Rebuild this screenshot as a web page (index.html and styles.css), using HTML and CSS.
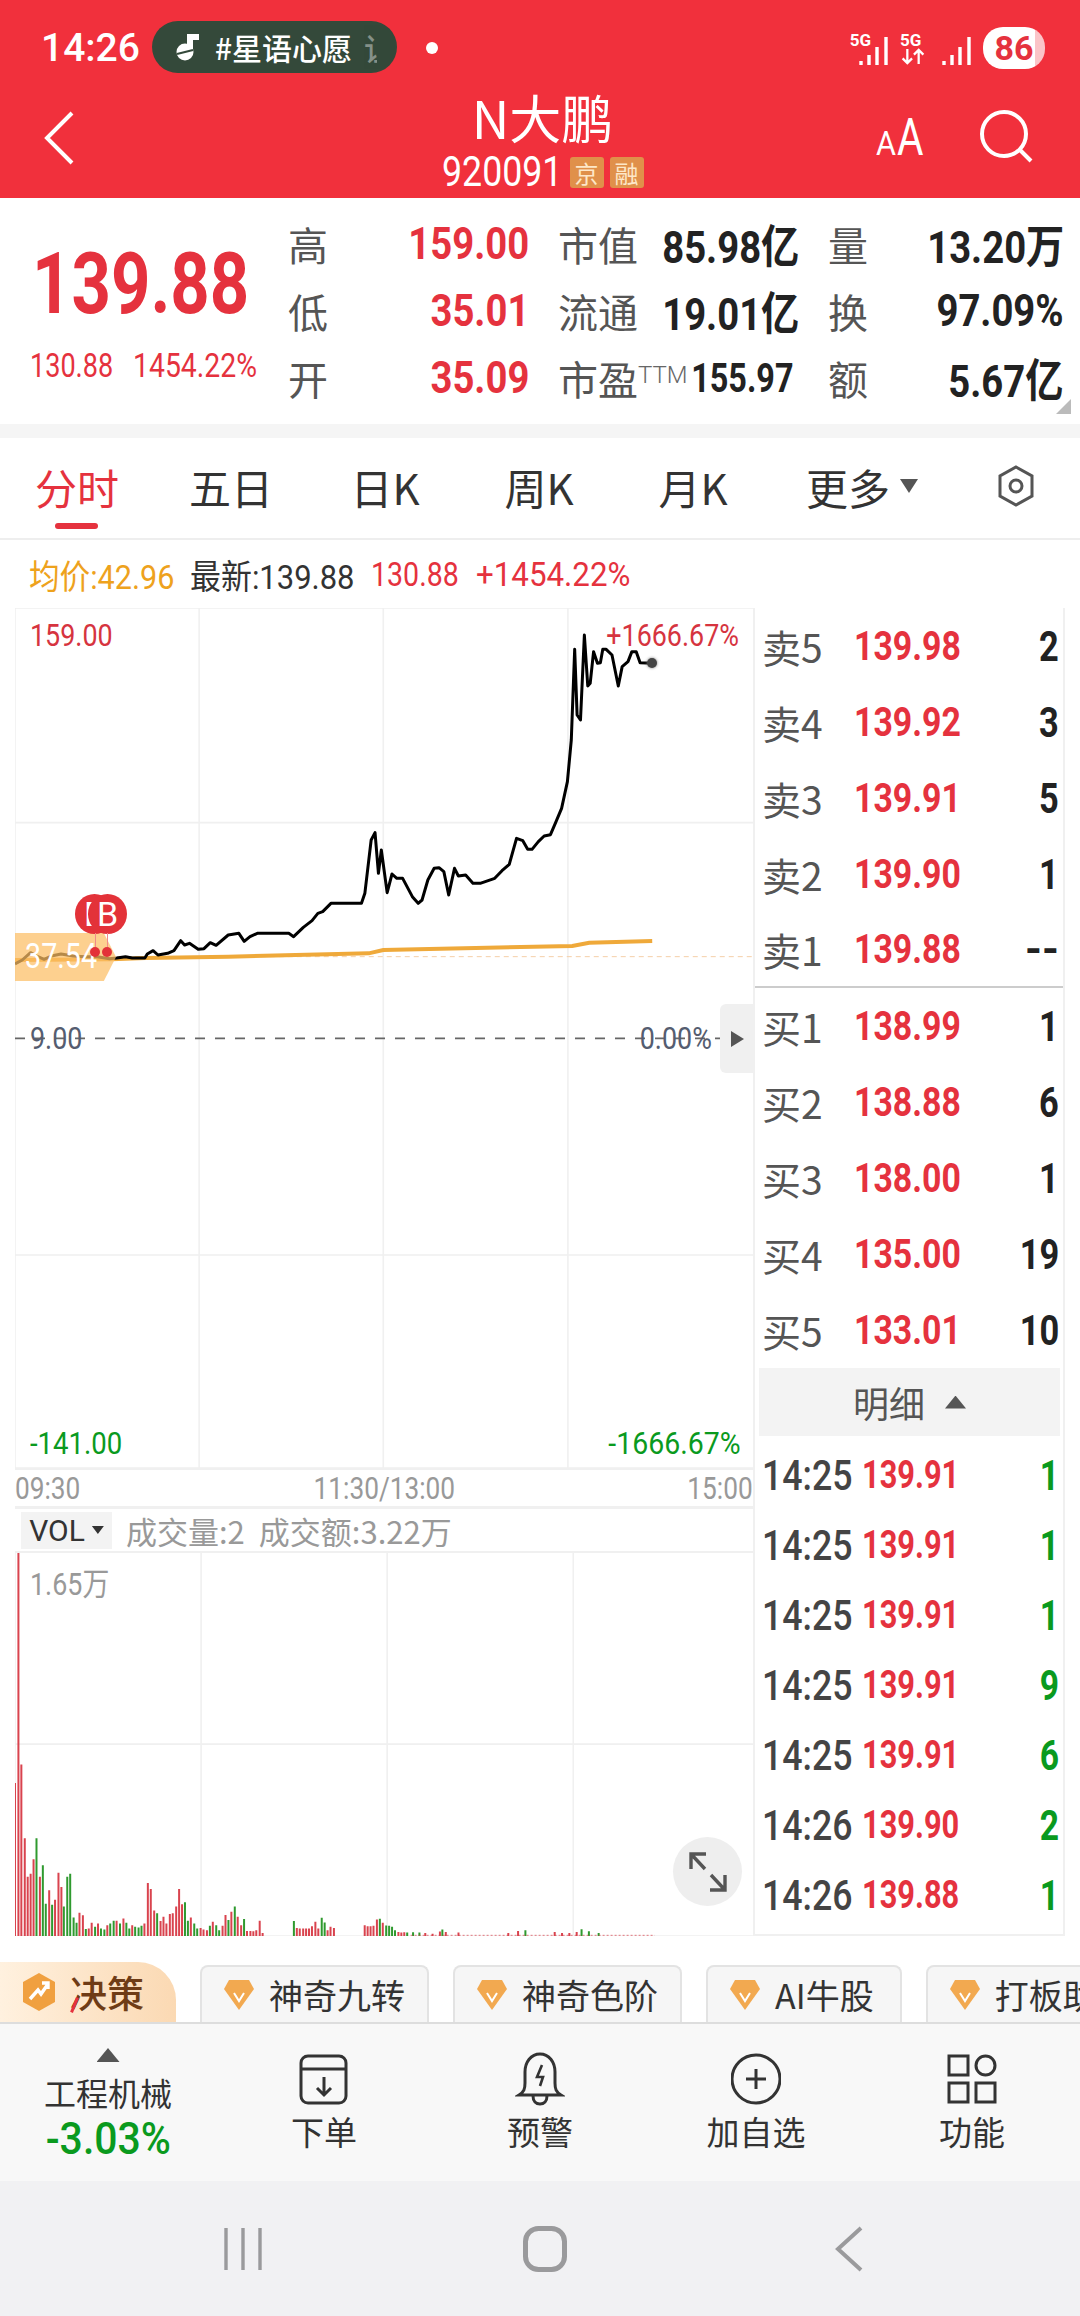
FILE: index.html
```html
<!DOCTYPE html>
<html lang="zh-CN">
<head>
  <meta charset="UTF-8" />
  <meta name="viewport" content="width=device-width, initial-scale=1.0"/>
  <title>N大鹏 920091</title>
  <link rel="stylesheet" href="styles.css">
</head>
<body>
  <header class="top">
    <div class="status">
      <span class="clock">14:26</span>
      <div class="topic">
        <svg class="topic-icon" width="26" height="28" viewBox="0 0 26 28"><path d="M12 1h12v6h-6v12h-6z" fill="#fff"/><circle cx="10" cy="19" r="8.500" fill="#fff"/><path d="m2 21 16-4" stroke="#34493a" stroke-width="2"/></svg>
        <span class="topic-text">#星语心愿</span>
        <span class="topic-fade">让</span>
      </div>
      <span class="status-dot"></span>
      <div class="status-right">
        <div class="sig"><span class="sig-net">5G</span><svg width="30" height="28" viewBox="0 0 30 28"><path d="M2 28v-4M10 28v-10M18 28V10M27 28V0" stroke="#fff" stroke-width="3.400" fill="none"/></svg></div>
        <div class="sig-stack"><span class="sig-net">5G</span><svg width="26" height="18" viewBox="0 0 26 18"><path d="M7 1v15M2 11l5 5 5-5M19 17V2M14 7l5-5 5 5" stroke="#fff" stroke-width="2.400" fill="none"/></svg></div>
        <svg class="sig-bars" width="30" height="28" viewBox="0 0 30 28"><path d="M2 28v-4M10 28v-10M18 28V10M27 28V0" stroke="#fff" stroke-width="3.400" fill="none"/></svg>
        <div class="battery">86</div>
      </div>
    </div>
    <div class="titlebar">
      <svg class="back" width="30" height="54" viewBox="0 0 30 54"><path d="M28 2 3 27l25 25" fill="none" stroke="#fff" stroke-width="4"/></svg>
      <div class="title-mid">
        <div class="stock-name">N大鹏</div>
        <div class="stock-code"><span class="code-num">920091</span><span class="badge">京</span><span class="badge">融</span></div>
      </div>
      <div class="title-tools">
        <span class="font-size"><span class="a-small">A</span><span class="a-big">A</span></span>
        <svg width="54" height="54" viewBox="0 0 54 54"><circle cx="25" cy="25" r="22" fill="none" stroke="#fff" stroke-width="4"/><path d="m40 40 12 12" stroke="#fff" stroke-width="4"/></svg>
      </div>
    </div>
  </header>

  <section class="quote">
    <div class="price-block">
      <div class="price">139.88</div>
      <div class="price-change"><span>130.88</span><span>1454.22%</span></div>
    </div>
    <div class="stats">
      <div class="stat"><span class="stat-label">高</span><span class="stat-num up">159.00</span></div>
      <div class="stat pad-a"><span class="stat-label">市值</span><span class="stat-num">85.98亿</span></div>
      <div class="stat pad-b"><span class="stat-label">量</span><span class="stat-num">13.20万</span></div>
      <div class="stat"><span class="stat-label">低</span><span class="stat-num up">35.01</span></div>
      <div class="stat pad-a"><span class="stat-label">流通</span><span class="stat-num">19.01亿</span></div>
      <div class="stat pad-b"><span class="stat-label">换</span><span class="stat-num">97.09%</span></div>
      <div class="stat"><span class="stat-label">开</span><span class="stat-num up">35.09</span></div>
      <div class="stat pad-a"><span class="stat-label">市盈<sup class="ttm">TTM</sup></span><span class="stat-num stat-pe">155.97</span></div>
      <div class="stat pad-b"><span class="stat-label">额</span><span class="stat-num">5.67亿</span></div>
    </div>
    <span class="corner"></span>
  </section>

  <nav class="tabs">
    <a class="tab tab-on">分时</a>
    <a class="tab">五日</a>
    <a class="tab">日K</a>
    <a class="tab">周K</a>
    <a class="tab">月K</a>
    <a class="tab">更多<span class="tab-caret"></span></a>
    <a class="tab"><svg width="36" height="42" viewBox="0 0 36 42"><path d="M18 2 34 11v20l-16 9-16-9V11z" fill="none" stroke="#555" stroke-width="3"/><circle cx="18" cy="21" r="6" fill="none" stroke="#555" stroke-width="3"/></svg></a>
  </nav>

  <div class="infoline">
    <span class="info-avg">均价:42.96</span>
    <span class="info-last">最新:139.88</span>
    <span class="info-chg">130.88</span>
    <span class="info-pct">+1454.22%</span>
  </div>

  <main class="board">
    <div class="charts">
      <div class="main-chart">
        <svg class="plot" viewBox="30 24 1523 2580" preserveAspectRatio="none">
          <g class="grid-line">
            <path d="M30 24V2604M410 24V2604M790 24V2604M1171 24V2604M30 24H1553M30 668H1553M30 1965H1553M30 2604H1553"/>
          </g>
          <path class="open-line" d="M240 1070H1553"/>
          <path class="zero-line" d="M30 1315H1553"/>
          <path class="avg-line" d="M30 1080 230 1078 300 1074 470 1070 760 1060 790 1050 1180 1038 1215 1028 1345 1023"/>
          <path class="price-line" d="M30 1092 45 1080 62 1058 75 1068 90 1078 105 1068 125 1062 150 1068 175 1070 200 1070 225 1076 240 1074 258 1070 272 1074 298 1074 303 1062 315 1052 325 1065 345 1060 358 1052 372 1022 380 1035 390 1030 408 1048 420 1046 433 1028 445 1036 470 1005 492 1000 503 1024 515 1010 530 1000 595 1000 605 1010 625 982 643 962 655 940 665 935 682 910 745 910 752 880 765 720 773 698 780 820 786 750 798 878 808 822 818 835 830 835 850 890 862 910 870 900 882 840 895 805 905 803 915 815 925 885 937 805 945 828 960 825 975 850 990 850 1020 835 1035 812 1050 793 1065 715 1078 722 1088 748 1097 748 1110 725 1122 708 1135 704 1145 670 1158 625 1170 545 1178 420 1185 148 1190 345 1197 360 1205 105 1212 258 1217 250 1224 155 1232 190 1238 188 1243 148 1250 148 1262 165 1275 258 1283 200 1295 185 1303 155 1312 155 1320 188 1345 190"/>
        </svg>
        <span class="axis axis-high">159.00</span>
        <span class="axis axis-r axis-high-pct">+1666.67%</span>
        <span class="axis axis-mid">9.00</span>
        <span class="axis axis-r axis-mid-pct">0.00%</span>
        <span class="axis axis-low">-141.00</span>
        <span class="axis axis-r axis-low-pct">-1666.67%</span>
        <span class="open-tag"><span class="open-num">37.54</span></span>
        <span class="trade-mark mark-one">B</span>
        <span class="trade-mark mark-two">B</span>
        <span class="trade-pin pin-one"></span>
        <span class="trade-pin pin-two"></span>
        <span class="end-dot"></span>
        <span class="side-toggle"></span>
      </div>
      <div class="timeline"><span>09:30</span><span>11:30/13:00</span><span>15:00</span></div>
      <div class="vol-head">
        <span class="vol-select">VOL<span class="vol-caret"></span></span>
        <span class="vol-info">成交量:2</span>
        <span class="vol-info">成交额:3.22万</span>
      </div>
      <div class="vol-chart">
        <svg class="plot" viewBox="30 395 1511 1132" preserveAspectRatio="none">
          <g class="grid-line">
            <path d="M30 395V1527M411 395V1527M792 395V1527M1173 395V1527M30 960H1541M30 1527H1541"/>
          </g>
          <path class="bar-red" d="M30 1527V1075M37 1527V395M43 1527V1020M50 1527V1238M56 1527V1352M62 1527V1343M68 1527V1300M81 1527V1352M100 1527V1392M112 1527V1420M119 1527V1340M125 1527V1382M162 1527V1458M169 1527V1466M181 1527V1505M187 1527V1488M200 1527V1490M219 1527V1495M238 1527V1482M252 1527V1475M270 1527V1495M295 1527V1490M302 1527V1370M308 1527V1388M315 1527V1452M328 1527V1483M334 1527V1470M340 1527V1490M347 1527V1462M353 1527V1460M360 1527V1440M366 1527V1388M372 1527V1433M390 1527V1472M410 1527V1503M416 1527V1508M423 1527V1510M435 1527V1485M455 1527V1497M461 1527V1465M473 1527V1455M486 1527V1470M493 1527V1495M505 1527V1512M512 1527V1512M518 1527V1513M524 1527V1510M531 1527V1482M537 1527V1518M607 1527V1503M613 1527V1505M620 1527V1505M626 1527V1505M632 1527V1505M638 1527V1498M645 1527V1485M651 1527V1505M670 1527V1510M676 1527V1500M683 1527V1503M746 1527V1495M752 1527V1498M758 1527V1498M764 1527V1497M771 1527V1478M783 1527V1488M815 1527V1515M821 1527V1517M827 1527V1516M870 1527V1518M885 1527V1520M900 1527V1514M912 1527V1515M938 1527V1517M1040 1527V1518M1060 1527V1512M1135 1527V1515M1150 1527V1518M1165 1527V1518M1180 1527V1515"/>
          <path class="bar-green" d="M74 1527V1238M87 1527V1318M93 1527V1432M106 1527V1435M130 1527V1440M137 1527V1352M143 1527V1343M150 1527V1472M156 1527V1488M175 1527V1506M194 1527V1500M206 1527V1505M213 1527V1508M225 1527V1490M232 1527V1482M245 1527V1490M258 1527V1488M264 1527V1505M276 1527V1500M283 1527V1502M289 1527V1497M321 1527V1460M378 1527V1427M384 1527V1482M397 1527V1490M403 1527V1505M429 1527V1497M442 1527V1495M448 1527V1510M467 1527V1480M480 1527V1440M499 1527V1477M601 1527V1483M658 1527V1473M664 1527V1487M777 1527V1476M790 1527V1496M796 1527V1497M802 1527V1500M808 1527V1510M833 1527V1517M845 1527V1516M858 1527V1517M905 1527V1508M1075 1527V1510M1190 1527V1507M1205 1527V1513M1225 1527V1518"/>
          <path class="bar-tail" d="M840 1525H1340"/>
        </svg>
        <span class="vol-max">1.65万</span>
        <span class="expand"><svg width="44" height="44" viewBox="0 0 44 44"><path d="M5 19V4h15M5 4l14 15M39 25v15H24M39 40 25 25" fill="none" stroke="#555" stroke-width="3.400"/></svg></span>
      </div>
    </div>

    <aside class="book">
      <div class="book-side side-sell">
        <div class="level"><span class="level-name">卖5</span><span class="level-price">139.98</span><span class="level-qty">2</span></div>
        <div class="level"><span class="level-name">卖4</span><span class="level-price">139.92</span><span class="level-qty">3</span></div>
        <div class="level"><span class="level-name">卖3</span><span class="level-price">139.91</span><span class="level-qty">5</span></div>
        <div class="level"><span class="level-name">卖2</span><span class="level-price">139.90</span><span class="level-qty">1</span></div>
        <div class="level"><span class="level-name">卖1</span><span class="level-price">139.88</span><span class="level-qty qty-empty">--</span></div>
      </div>
      <div class="book-side">
        <div class="level"><span class="level-name">买1</span><span class="level-price">138.99</span><span class="level-qty">1</span></div>
        <div class="level"><span class="level-name">买2</span><span class="level-price">138.88</span><span class="level-qty">6</span></div>
        <div class="level"><span class="level-name">买3</span><span class="level-price">138.00</span><span class="level-qty">1</span></div>
        <div class="level"><span class="level-name">买4</span><span class="level-price">135.00</span><span class="level-qty">19</span></div>
        <div class="level"><span class="level-name">买5</span><span class="level-price">133.01</span><span class="level-qty">10</span></div>
      </div>
      <div class="detail-bar">明细<span class="detail-caret"></span></div>
      <div class="deals">
        <div class="deal"><span class="deal-time">14:25</span><span class="deal-price">139.91</span><span class="deal-qty">1</span></div>
        <div class="deal"><span class="deal-time">14:25</span><span class="deal-price">139.91</span><span class="deal-qty">1</span></div>
        <div class="deal"><span class="deal-time">14:25</span><span class="deal-price">139.91</span><span class="deal-qty">1</span></div>
        <div class="deal"><span class="deal-time">14:25</span><span class="deal-price">139.91</span><span class="deal-qty">9</span></div>
        <div class="deal"><span class="deal-time">14:25</span><span class="deal-price">139.91</span><span class="deal-qty">6</span></div>
        <div class="deal"><span class="deal-time">14:26</span><span class="deal-price">139.90</span><span class="deal-qty">2</span></div>
        <div class="deal"><span class="deal-time">14:26</span><span class="deal-price">139.88</span><span class="deal-qty">1</span></div>
      </div>
    </aside>
  </main>

  <div class="strip">
    <div class="decide">
      <svg width="36" height="40" viewBox="0 0 36 40"><path d="M18 1 34 10v20l-16 9-16-9V10z" fill="#f0a040"/><path d="m9 27 8-9 3 4 7-10M21 11h6v6" fill="none" stroke="#fff" stroke-width="3.400"/></svg>
      <span class="decide-text">决策</span>
    </div>
    <div class="chip"><svg class="gem" width="30" height="30" viewBox="0 0 30 30"><path d="M5 0h20l5 9-15 21L0 9z" fill="#f2a950"/><path d="m10 13 5 8 5-8" fill="none" stroke="#fff" stroke-width="2"/></svg>神奇九转</div>
    <div class="chip"><svg class="gem" width="30" height="30" viewBox="0 0 30 30"><path d="M5 0h20l5 9-15 21L0 9z" fill="#f2a950"/><path d="m10 13 5 8 5-8" fill="none" stroke="#fff" stroke-width="2"/></svg>神奇色阶</div>
    <div class="chip chip-ai"><svg class="gem" width="30" height="30" viewBox="0 0 30 30"><path d="M5 0h20l5 9-15 21L0 9z" fill="#f2a950"/><path d="m10 13 5 8 5-8" fill="none" stroke="#fff" stroke-width="2"/></svg>AI牛股</div>
    <div class="chip"><svg class="gem" width="30" height="30" viewBox="0 0 30 30"><path d="M5 0h20l5 9-15 21L0 9z" fill="#f2a950"/><path d="m10 13 5 8 5-8" fill="none" stroke="#fff" stroke-width="2"/></svg>打板助</div>
  </div>

  <footer class="actions">
    <div class="action sector">
      <span class="sector-caret"></span>
      <span class="sector-name">工程机械</span>
      <span class="sector-pct">-3.03%</span>
    </div>
    <div class="action">
      <svg class="action-icon" width="50" height="54" viewBox="0 0 50 54"><rect x="2" y="4" width="45" height="47" rx="7" fill="none" stroke="#333" stroke-width="3"/><path d="M2 17h45M25 25v18M18 36l7 7 7-7" fill="none" stroke="#333" stroke-width="3"/></svg>
      <span class="action-name">下单</span>
    </div>
    <div class="action">
      <svg class="action-icon" width="50" height="54" viewBox="0 0 50 54"><path d="M4 43c5-3 6-6 6-12V20C10 10 16 2 25 2s15 8 15 18v11c0 6 1 9 6 12zM18 44c0 5 3 8 7 8s7-3 7-8" fill="none" stroke="#333" stroke-width="3"/><path d="m27 13-5 12h6l-3 9" fill="none" stroke="#333" stroke-width="2.600"/></svg>
      <span class="action-name">预警</span>
    </div>
    <div class="action">
      <svg class="action-icon" width="50" height="54" viewBox="0 0 50 54"><circle cx="25" cy="27" r="24" fill="none" stroke="#333" stroke-width="3"/><path d="M25 17v20M15 27h20" stroke="#333" stroke-width="3"/></svg>
      <span class="action-name">加自选</span>
    </div>
    <div class="action">
      <svg class="action-icon" width="50" height="54" viewBox="0 0 50 54"><path d="M2 4h19v19H2zM2 31h19v19H2zM29 31h19v19H29z" fill="none" stroke="#333" stroke-width="3"/><circle cx="38.500" cy="13.500" r="9.500" fill="none" stroke="#333" stroke-width="3"/></svg>
      <span class="action-name">功能</span>
    </div>
  </footer>

  <div class="sysnav">
    <svg width="40" height="44" viewBox="0 0 40 44"><path d="M3 1v42M20 1v42M37 1v42" stroke="#9a9a9c" stroke-width="3.400"/></svg>
    <svg width="44" height="46" viewBox="0 0 44 46"><rect x="2.500" y="2.500" width="39" height="41" rx="13" fill="none" stroke="#9a9a9c" stroke-width="5"/></svg>
    <svg class="nav-back" width="28" height="46" viewBox="0 0 28 46"><path d="M26 2 3 23l23 21" fill="none" stroke="#9a9a9c" stroke-width="4"/></svg>
  </div>
</body>
</html>
```

FILE: styles.css
```css
:root {
  --red: #e5323e;
  --green: #0a9a1e;
  --line: #f0f0f0;
  --num: Roboto, "Noto Sans CJK SC", sans-serif;
  --cjk: "Noto Sans CJK SC", "Noto Sans", sans-serif;
}

* {
  box-sizing: border-box;
}

body {
  margin: 0;
  width: 1080px;
  background: #fff;
  font-family: var(--num);
  color: #222;
  overflow-x: hidden;
}

.up {
  color: var(--red);
}

/* the app's digits are a narrow face, Roboto squeezed gets close */
.price,
.price-change span,
.code-num,
.infoline span,
.axis,
.open-num,
.timeline span,
.vol-max,
.level-price,
.deal-time,
.deal-price {
  display: inline-block;
  white-space: nowrap;
  transform: scaleX(var(--sx, .82));
  transform-origin: left center;
}

.stat-num,
.axis-r,
.level-qty,
.deal-qty {
  display: inline-block;
  white-space: nowrap;
  transform: scaleX(var(--sx, .82));
  transform-origin: right center;
}

/* red header */
.top {
  height: 198px;
  background: #f1303c;
  color: #fff;
}

.status {
  height: 84px;
  display: flex;
  align-items: center;
  padding: 12px 35px 0 41px;
}

.clock {
  font: 500 39px Roboto, sans-serif;
  width: 111px;
}

.topic {
  width: 245px;
  height: 52px;
  border-radius: 26px;
  background: #34493a;
  display: flex;
  align-items: center;
  padding-left: 23px;
  overflow: hidden;
  margin-top: -2px;
}

.topic-text {
  font: 500 30px var(--cjk);
  margin-left: 14px;
  white-space: nowrap;
}

.topic-fade {
  flex: none;
  width: 13px;
  overflow: hidden;
  font: 500 30px var(--cjk);
  opacity: .4;
  margin-left: 12px;
}

.status-dot {
  width: 12px;
  height: 12px;
  border-radius: 50%;
  background: #fff;
  margin-left: 29px;
}

.status-right {
  margin-left: auto;
  display: flex;
  align-items: flex-end;
  gap: 11px;
  height: 42px;
}

.sig {
  display: flex;
  align-items: flex-end;
  height: 32px;
  margin-bottom: 4px;
}

.sig-net {
  font: 700 17px/14px Roboto, sans-serif;
  align-self: flex-start;
}

.sig svg {
  margin-left: -12px;
}

.sig-stack {
  display: flex;
  flex-direction: column;
  align-items: center;
  height: 32px;
  margin-bottom: 4px;
}

.sig-stack svg {
  margin-top: 1px;
}

.sig-bars {
  margin: 0 0 4px 5px;
}

.battery {
  width: 62px;
  height: 42px;
  border-radius: 20px;
  background: linear-gradient(90deg, #fff 0 84%, #fbc4c8 84%);
  color: #e5323e;
  font: 700 34px/42px Roboto, sans-serif;
  text-align: center;
}

.titlebar {
  height: 114px;
  display: grid;
  grid-template-columns: 1fr auto 1fr;
  align-items: start;
  padding: 0 47px 0 44px;
}

.back {
  margin-top: 27px;
}

.title-mid {
  text-align: center;
  padding-top: 6px;
  padding-left: 8px;
}

.stock-name {
  font: 400 52px/54px var(--cjk);
}

.stock-code {
  display: flex;
  align-items: center;
  height: 40px;
  margin-top: 8px;
}

.code-num {
  width: 122px;
  font-size: 42px;
  line-height: 40px;
  --sx: .85;
}

.badge {
  width: 34px;
  height: 31px;
  margin-left: 6px;
  border-radius: 3px;
  background: #e0904a;
  color: #fde7c8;
  font: 400 24px/31px var(--cjk);
  text-align: center;
}

.title-tools {
  display: flex;
  justify-content: flex-end;
  align-items: center;
  gap: 56px;
  margin-top: 24px;
}

.font-size {
  display: flex;
  align-items: baseline;
  font-family: Roboto, sans-serif;
  margin-top: 4px;
}

.a-small {
  font-size: 34px;
  display: inline-block;
  transform: scaleX(.9);
}

.a-big {
  font-size: 52px;
  line-height: 52px;
  display: inline-block;
  transform: scaleX(.78);
  transform-origin: left center;
  margin-right: -8px;
}

/* quote panel */
.quote {
  position: relative;
  height: 240px;
  border-bottom: 14px solid #f5f5f5;
  display: flex;
}

.price-block {
  width: 288px;
  padding-left: 30px;
}

.price {
  display: block;
  font-size: 86px;
  font-weight: 700;
  line-height: 90px;
  color: var(--red);
  margin-top: 41px;
  margin-left: 2px;
  --sx: .8;
}

.price-change {
  display: flex;
  margin-top: 19px;
  font-size: 33px;
  line-height: 36px;
  color: var(--red);
}

.price-change span:first-child {
  width: 103px;
}

.price-change span:last-child {
  --sx: .86;
}

.stats {
  display: grid;
  grid-template-columns: 241px 265px 270px;
  grid-auto-rows: 67px;
  padding-top: 12px;
}

.stat {
  display: flex;
  justify-content: space-between;
  align-items: center;
}

.pad-a {
  padding-left: 29px;
}

.pad-b {
  padding-left: 34px;
}

.stat-label {
  font: 400 40px/44px var(--cjk);
  color: #555;
  white-space: nowrap;
}

.ttm {
  font: 300 24px/1 Roboto, sans-serif;
  color: #666;
  vertical-align: 12px;
}

.stat-num {
  font-size: 45px;
  font-weight: 700;
  --sx: .85;
}

.stat-pe {
  font-size: 41px;
  margin-left: -40px;
  --sx: .79;
}

.corner {
  position: absolute;
  right: 9px;
  bottom: 10px;
  width: 15px;
  height: 15px;
  background: #bbb;
  clip-path: polygon(100% 0, 100% 100%, 0 100%);
}

/* period tabs */
.tabs {
  height: 102px;
  border-bottom: 2px solid #eee;
  display: grid;
  grid-template-columns: repeat(5, 154px) 184px 124px;
}

.tab {
  display: flex;
  align-items: center;
  justify-content: center;
  height: 96px;
  font: 400 42px var(--cjk);
  color: #333;
}

.tab-on {
  position: relative;
  color: var(--red);
}

.tab-on::after {
  content: "";
  position: absolute;
  left: 55px;
  bottom: 5px;
  width: 43px;
  height: 6px;
  border-radius: 3px;
  background: var(--red);
}

.tab-caret {
  width: 18px;
  height: 14px;
  margin-left: 10px;
  background: #555;
  clip-path: polygon(0 0, 100% 0, 50% 100%);
}

.infoline {
  height: 68px;
  display: flex;
  align-items: center;
  padding-left: 29px;
  font-size: 34px;
}

.info-avg {
  width: 161px;
  color: #eea21d;
  --sx: .9;
}

.info-last {
  width: 181px;
  color: #333;
  --sx: .91;
}

.info-chg {
  width: 105px;
  color: var(--red);
  --sx: .84;
}

.info-pct {
  color: var(--red);
  --sx: .92;
}

/* chart + order book */
.board {
  display: flex;
  height: 1328px;
  padding-left: 15px;
  padding-right: 15px;
}

.charts {
  width: 738px;
}

.main-chart {
  position: relative;
  height: 862px;
  border-bottom: 2px solid var(--line);
}

.plot {
  display: block;
  width: 100%;
  height: 100%;
}

.grid-line path {
  fill: none;
  stroke: var(--line);
  stroke-width: 1.600;
  vector-effect: non-scaling-stroke;
}

.open-line {
  fill: none;
  stroke: #f5cfa8;
  stroke-width: 1;
  stroke-dasharray: 5 4;
  vector-effect: non-scaling-stroke;
}

.zero-line {
  fill: none;
  stroke: #666;
  stroke-width: 1.600;
  stroke-dasharray: 10 10;
  vector-effect: non-scaling-stroke;
}

.avg-line {
  fill: none;
  stroke: #efa93a;
  stroke-width: 4;
  vector-effect: non-scaling-stroke;
}

.price-line {
  fill: none;
  stroke: #000;
  stroke-width: 3;
  stroke-linejoin: round;
  vector-effect: non-scaling-stroke;
}

.axis {
  position: absolute;
  font-size: 32px;
  line-height: 36px;
  --sx: .84;
}

.axis-high {
  left: 15px;
  top: 9px;
  color: #d6343f;
}

.axis-high-pct {
  right: 14px;
  top: 9px;
  color: #d6343f;
}

.axis-mid {
  left: 15px;
  top: 412px;
  color: #555d70;
}

.axis-mid-pct {
  right: 41px;
  top: 412px;
  color: #555d70;
}

.axis-low {
  left: 15px;
  top: 817px;
  color: var(--green);
  --sx: .86;
}

.axis-low-pct {
  right: 12px;
  top: 817px;
  color: var(--green);
  --sx: .89;
}

.open-tag {
  position: absolute;
  left: 0;
  top: 325px;
  width: 101px;
  height: 48px;
  padding-left: 10px;
  background: rgba(252, 190, 100, .72);
  clip-path: polygon(0 0, 88% 0, 100% 50%, 88% 100%, 0 100%);
  color: #fff;
  font-size: 35px;
  line-height: 48px;
}

.trade-mark {
  position: absolute;
  top: 286px;
  width: 39px;
  height: 40px;
  border-radius: 50%;
  background: #e33239;
  color: #fff;
  font: 400 34px/40px Roboto, sans-serif;
  text-align: center;
}

.mark-one {
  left: 60px;
}

.mark-two {
  left: 73px;
}

.trade-pin {
  position: absolute;
  top: 325px;
  width: 10px;
  height: 24px;
  background: linear-gradient(#f08a8a 0 0) center top / 1px 14px no-repeat;
}

.trade-pin::after {
  content: "";
  position: absolute;
  left: 0;
  bottom: 0;
  width: 10px;
  height: 10px;
  border-radius: 50%;
  background: #e33239;
}

.pin-one {
  left: 75px;
}

.pin-two {
  left: 87px;
}

.end-dot {
  position: absolute;
  left: 632px;
  top: 50px;
  width: 10px;
  height: 10px;
  border-radius: 50%;
  background: #444;
  box-shadow: 0 0 3px #777;
}

.side-toggle {
  position: absolute;
  right: 0;
  top: 396px;
  width: 33px;
  height: 69px;
  background: #f0f0f0;
  border-radius: 6px 0 0 6px;
}

.side-toggle::after {
  content: "";
  position: absolute;
  left: 11px;
  top: 27px;
  width: 13px;
  height: 16px;
  background: #555;
  clip-path: polygon(0 0, 100% 50%, 0 100%);
}

.timeline {
  height: 36px;
  display: flex;
  justify-content: space-between;
  align-items: center;
  font-size: 32px;
  color: #999;
}

.timeline span:nth-child(2) {
  transform-origin: center;
}

.timeline span:last-child {
  transform-origin: right center;
}

.vol-head {
  height: 47px;
  display: flex;
  align-items: center;
  gap: 14px;
  padding-left: 6px;
  border-top: 3px solid var(--line);
  border-bottom: 2px solid var(--line);
}

.vol-select {
  width: 91px;
  height: 37px;
  display: flex;
  align-items: center;
  justify-content: center;
  background: #f3f3f3;
  font-size: 30px;
  color: #333;
}

.vol-caret {
  width: 12px;
  height: 8px;
  margin-left: 7px;
  background: #333;
  clip-path: polygon(0 0, 100% 0, 50% 100%);
}

.vol-info {
  font: 400 31px var(--cjk);
  color: #999;
}

.vol-chart {
  position: relative;
  height: 383px;
}

.bar-red {
  fill: none;
  stroke: #d9434e;
  stroke-width: 2;
  vector-effect: non-scaling-stroke;
}

.bar-green {
  fill: none;
  stroke: #2f9a2f;
  stroke-width: 2;
  vector-effect: non-scaling-stroke;
}

.bar-tail {
  fill: none;
  stroke: #d9434e;
  stroke-width: 1;
  stroke-dasharray: 2 2;
  opacity: .7;
  vector-effect: non-scaling-stroke;
}

.vol-max {
  position: absolute;
  left: 15px;
  top: 12px;
  font-size: 32px;
  line-height: 38px;
  color: #999;
  --sx: .84;
}

.expand {
  position: absolute;
  left: 658px;
  top: 284px;
  width: 69px;
  height: 69px;
  border-radius: 50%;
  background: #eee;
  display: flex;
  align-items: center;
  justify-content: center;
}

.book {
  width: 312px;
  border-left: 2px solid var(--line);
  border-right: 2px solid var(--line);
  border-bottom: 2px solid var(--line);
}

.side-sell {
  border-bottom: 2px solid #ccc;
}

.level {
  height: 76px;
  display: flex;
  align-items: center;
  padding: 0 4px 0 7px;
}

.side-sell .level:last-child {
  height: 74px;
}

.level-name {
  font: 400 39px/1 var(--cjk);
  color: #555;
  width: 92px;
  white-space: nowrap;
}

.level-price {
  font-size: 41px;
  font-weight: 700;
  color: var(--red);
  --sx: .825;
}

.level-qty {
  margin-left: auto;
  font-size: 43px;
  font-weight: 700;
  color: #222;
  --sx: .8;
}

.qty-empty {
  --sx: 1;
}

.detail-bar {
  height: 68px;
  margin: 0 3px 4px 4px;
  background: #f3f3f3;
  display: flex;
  align-items: center;
  justify-content: center;
  font: 400 36px var(--cjk);
  color: #555;
}

.detail-caret {
  width: 21px;
  height: 13px;
  margin-left: 20px;
  background: #555;
  clip-path: polygon(50% 0, 100% 100%, 0 100%);
}

.deal {
  height: 70px;
  display: flex;
  align-items: center;
  padding: 0 4px 0 7px;
}

.deal-time {
  width: 100px;
  font-size: 42px;
  font-weight: 500;
  color: #444;
  --sx: .85;
}

.deal-price {
  font-size: 38px;
  font-weight: 700;
  color: var(--red);
  --sx: .81;
}

.deal-qty {
  margin-left: auto;
  font-size: 42px;
  font-weight: 700;
  color: var(--green);
  --sx: .8;
}

/* function strip */
.strip {
  height: 86px;
  padding-top: 26px;
  display: flex;
  align-items: flex-end;
  gap: 24px;
  overflow: hidden;
}

.decide {
  position: relative;
  flex: none;
  width: 176px;
  height: 60px;
  border-radius: 0 38px 0 0;
  background: linear-gradient(90deg, #fff1df, #fbd9b3);
  display: flex;
  align-items: center;
  padding-left: 21px;
}

.decide::after {
  content: "";
  position: absolute;
  left: 73px;
  top: 35px;
  width: 3px;
  height: 16px;
  background: #e5323e;
  transform: rotate(22deg);
}

.decide-text {
  font: 500 37px var(--cjk);
  color: #6f3c16;
  margin-left: 13px;
}

.chip {
  flex: none;
  height: 57px;
  padding: 0 22px;
  background: #f6f6f6;
  border: 2px solid #e3e3e3;
  border-bottom: 0;
  border-radius: 8px 8px 0 0;
  display: flex;
  align-items: center;
  font: 400 34px var(--cjk);
  color: #333;
}

.chip-ai {
  padding-right: 26px;
}

.gem {
  margin-right: 15px;
}

/* bottom actions */
.actions {
  height: 159px;
  background: #f8f8f8;
  border-top: 2px solid #ddd;
  display: grid;
  grid-template-columns: repeat(5, 216px);
}

.action {
  display: flex;
  flex-direction: column;
  align-items: center;
  padding-top: 28px;
}

.action-name {
  font: 400 33px/40px var(--cjk);
  color: #333;
  margin-top: 5px;
}

.sector {
  padding-top: 24px;
}

.sector-caret {
  width: 23px;
  height: 14px;
  background: #555;
  clip-path: polygon(50% 0, 100% 100%, 0 100%);
}

.sector-name {
  font: 400 32px/40px var(--cjk);
  color: #333;
  margin-top: 10px;
}

.sector-pct {
  display: inline-block;
  font-size: 44px;
  line-height: 48px;
  margin-top: 3px;
  font-weight: 500;
  color: var(--green);
  transform: scaleX(.93);
}

.sysnav {
  height: 135px;
  background: #f1f1f3;
  display: flex;
  align-items: center;
  gap: 260px;
  padding-left: 223px;
}

.nav-back {
  margin-left: 8px;
}
```
